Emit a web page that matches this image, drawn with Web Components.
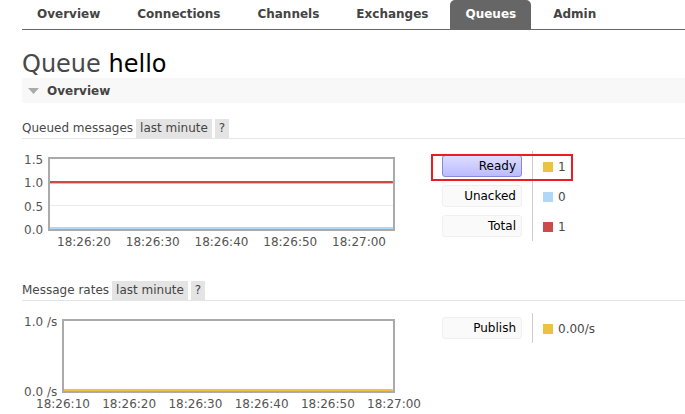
<!DOCTYPE html>
<html lang="en">
<head>
<meta charset="utf-8">
<title>Queue hello</title>
<style>
  body {
    margin: 0;
    background: #fff;
    color: #484848;
    font: 12px/16px "DejaVu Sans", Verdana, sans-serif;
  }
</style>
</head>
<body>
<queue-page></queue-page>

<script>
class TabItem extends HTMLElement {
  connectedCallback() {
    const root = this.attachShadow({ mode: 'open' });
    root.innerHTML = `
      <style>
        :host { display: block; }
        a {
          display: block;
          padding: 6px 15px 7px;
          border-radius: 5px 5px 0 0;
          color: #444;
          font-weight: bold;
          text-decoration: none;
        }
        :host([selected]) a { background: #666; color: #fff; }
      </style>
      <a href="#"><slot></slot></a>`;
    if (this.hasAttribute('selected')) root.querySelector('a').setAttribute('aria-current', 'page');
  }
}

class TabBar extends HTMLElement {
  connectedCallback() {
    this.attachShadow({ mode: 'open' }).innerHTML = `
      <style>
        :host { display: block; }
        nav { display: flex; gap: 7px; border-bottom: 1px solid #666; }
      </style>
      <nav><slot></slot></nav>`;
  }
}

class SectionBar extends HTMLElement {
  connectedCallback() {
    this.attachShadow({ mode: 'open' }).innerHTML = `
      <style>
        :host { display: block; background: #f8f8f8; }
        h2 { margin: 0; font-size: 12px; }
        button {
          display: flex;
          align-items: center;
          gap: 8px;
          width: 100%;
          padding: 5px 6px 4px;
          border: 0;
          background: none;
          color: #444;
          font: inherit;
          line-height: 16px;
        }
        svg { display: block; }
      </style>
      <h2><button type="button" aria-expanded="true">
        <svg width="11" height="6" viewBox="0 0 11 6" aria-hidden="true"><path d="M0 0h11L5.500 6z" fill="#aaa"/></svg>
        <slot></slot>
      </button></h2>`;
  }
}

class ChartHeading extends HTMLElement {
  connectedCallback() {
    this.attachShadow({ mode: 'open' }).innerHTML = `
      <style>
        :host { display: flex; gap: 3px; border-bottom: 1px solid #e4e4e4; line-height: 19px; }
        h3 { margin: 0; font: inherit; }
        button {
          padding: 0 4px;
          border: 0;
          background: #e4e4e4;
          color: #444;
          font: inherit;
          line-height: 19px;
        }
      </style>
      <h3><slot></slot></h3>
      <button type="button">last minute</button>
      <button type="button" aria-label="Help">?</button>`;
  }
}

class LineChart extends HTMLElement {
  connectedCallback() {
    const list = name => this.getAttribute(name).split(',');
    const spans = items => items.map(t => `<span>${t}</span>`).join('');
    this.attachShadow({ mode: 'open' }).innerHTML = `
      <style>
        :host { display: block; width: 400px; color: #545454; line-height: 12px; }
        .chart { display: grid; grid-template-columns: auto 1fr; column-gap: 5px; padding-left: 2px; }
        .y { display: flex; flex-direction: column; justify-content: space-between; height: 82px; margin-top: 1px; }
        .plot { height: 70px; margin: 4px 27px 0 0; border: 2px solid #aaa; }
        svg { display: block; width: 100%; height: 100%; }
        .x { display: flex; justify-content: space-between; padding: var(--ticks, 0 36px 0 35px); }
      </style>
      <div class="chart">
        <div class="y">${spans(list('y'))}</div>
        <div class="plot"><svg viewBox="0 0 100 70" preserveAspectRatio="none" aria-hidden="true">${this.lines()}</svg></div>
      </div>
      <div class="x">${spans(list('x'))}</div>`;
  }
  lines() {
    const line = (y, h, c) => `<rect width="100" y="${y}" height="${h}" fill="${c}"/>`;
    return this.getAttribute('kind') === 'messages'
      ? line(46, 1, '#ebebeb') + line(22, 2, '#cb4b4b') + line(24, 1, '#e9b8a0') + line(68, 2, '#afd8f8')
      : line(68, 2, '#edc240');
  }
}

class ChartLegend extends HTMLElement {
  connectedCallback() {
    const rows = this.getAttribute('rows').split(';').map(r => r.split(','));
    this.attachShadow({ mode: 'open' }).innerHTML = `
      <style>
        :host { display: block; position: relative; }
        table { border-collapse: collapse; }
        th, td { height: 30px; padding: 0; font-weight: normal; }
        th { padding-right: 10px; }
        td { border-left: 1px solid #ccc; }
        button {
          display: block;
          width: 80px;
          height: 22px;
          padding: 0 5px;
          border: 1px solid #f0f0f0;
          border-radius: 3px;
          background: #fafafa;
          color: #000;
          font: inherit;
          line-height: 18px;
          text-align: right;
        }
        button[aria-pressed="true"] { border-color: #8888dd; background: linear-gradient(#ddddff, #bbbbff); }
        .value { display: flex; align-items: center; gap: 5px; padding: 2px 0 0 10px; }
        i { width: 10px; height: 10px; background: var(--c); }
        .mark {
          position: absolute;
          top: 3px;
          left: -11px;
          width: 138px;
          height: 23px;
          border: 2px solid #ed1c24;
          pointer-events: none;
        }
      </style>
      <table>${rows.map(([name, value, color, on]) => `
        <tr>
          <th scope="row"><button type="button" aria-pressed="${Boolean(on)}">${name}</button></th>
          <td><div class="value"><i style="--c:${color}"></i><span>${value}</span></div></td>
        </tr>`).join('')}
      </table>
      ${this.hasAttribute('marked') ? '<div class="mark"></div>' : ''}`;
  }
}

class QueuePage extends HTMLElement {
  connectedCallback() {
    this.attachShadow({ mode: 'open' }).innerHTML = `
      <style>
        :host { display: block; padding-left: 22px; }
        h1 { margin: 20px 0 0; font-size: 24px; line-height: 28px; font-weight: normal; }
        h1 b { color: #000; font-weight: normal; }
        chart-heading { margin-top: 16px; }
        .row { display: flex; align-items: flex-start; gap: 20px; padding-top: 12px; }
        line-chart { margin-top: 2px; }
        .row + chart-heading { margin-top: 33px; }
        .rates { --ticks: 0 1px 0 14px; }
      </style>
      <tab-bar>
        <tab-item>Overview</tab-item>
        <tab-item>Connections</tab-item>
        <tab-item>Channels</tab-item>
        <tab-item>Exchanges</tab-item>
        <tab-item selected>Queues</tab-item>
        <tab-item>Admin</tab-item>
      </tab-bar>
      <h1>Queue <b>hello</b></h1>
      <section-bar>Overview</section-bar>
      <chart-heading>Queued messages</chart-heading>
      <div class="row">
        <line-chart kind="messages" y="1.5,1.0,0.5,0.0" x="18:26:20,18:26:30,18:26:40,18:26:50,18:27:00"></line-chart>
        <chart-legend marked rows="Ready,1,#edc240,on;Unacked,0,#afd8f8;Total,1,#cb4b4b"></chart-legend>
      </div>
      <chart-heading>Message rates</chart-heading>
      <div class="row rates">
        <line-chart kind="rates" y="1.0 /s,0.0 /s" x="18:26:10,18:26:20,18:26:30,18:26:40,18:26:50,18:27:00"></line-chart>
        <chart-legend rows="Publish,0.00/s,#edc240"></chart-legend>
      </div>`;
  }
}

customElements.define('tab-item', TabItem);
customElements.define('tab-bar', TabBar);
customElements.define('section-bar', SectionBar);
customElements.define('chart-heading', ChartHeading);
customElements.define('line-chart', LineChart);
customElements.define('chart-legend', ChartLegend);
customElements.define('queue-page', QueuePage);
</script>
</body>
</html>
